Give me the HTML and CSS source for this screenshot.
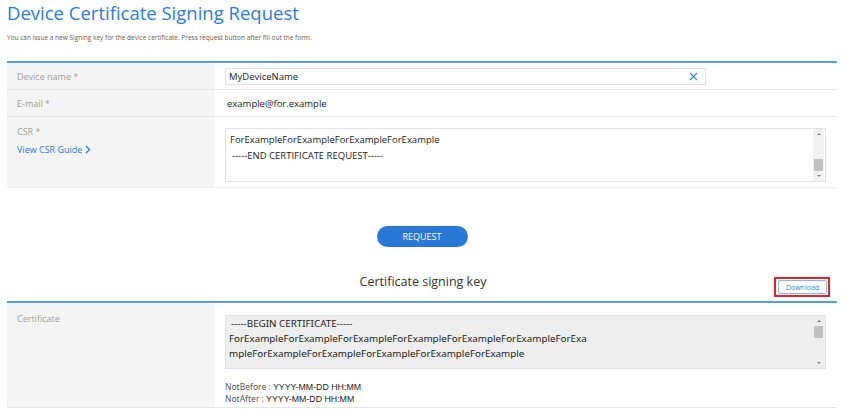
FILE: index.html
```html
<!DOCTYPE html>
<html>
<head>
<meta charset="utf-8">
<link rel="stylesheet" href="styles.css">
</head>
<body>
<div class="page">
  <h1 class="title">Device Certificate Signing Request</h1>
  <p class="intro">You can issue a new Signing key for the device certificate. Press request button after fill out the form.</p>

  <div class="table form-table">
    <div class="row row-short">
      <div class="label">Device name *</div>
      <div class="value">
        <div class="input">
          <span class="input-text">MyDeviceName</span>
          <svg class="clear" width="9" height="9" viewBox="0 0 9 9"><path d="M1 1 L8 8 M8 1 L1 8" stroke="#3b86dc" stroke-width="1.2" fill="none"/></svg>
        </div>
      </div>
    </div>
    <div class="row row-short">
      <div class="label">E-mail *</div>
      <div class="value"><span class="plain">example@for.example</span></div>
    </div>
    <div class="row row-tall">
      <div class="label label-top">
        <span>CSR *</span>
        <a class="guide">View CSR Guide <svg width="6" height="9" viewBox="0 0 6 9"><path d="M1 1 L4.5 4.5 L1 8" stroke="#2a78d6" stroke-width="1.2" fill="none"/></svg></a>
      </div>
      <div class="value value-top">
        <div class="textbox">
          <div class="textbox-content">
            <div class="csr-line">ForExampleForExampleForExampleForExample</div>
            <div class="csr-line indent">-----END CERTIFICATE REQUEST-----</div>
          </div>
          <div class="scrollbar">
            <span class="arrow up"></span>
            <span class="track"><span class="thumb thumb-bottom"></span></span>
            <span class="arrow down"></span>
          </div>
        </div>
      </div>
    </div>
  </div>

  <div class="actions">
    <button class="request">REQUEST</button>
  </div>

  <div class="section-head">
    <h2 class="section-title">Certificate signing key</h2>
    <div class="download-wrap"><button class="download">Download</button></div>
  </div>

  <div class="table cert-table">
    <div class="row row-cert">
      <div class="label label-top">Certificate</div>
      <div class="value value-top">
        <div class="textbox grey">
          <div class="textbox-content cert">
            <div class="cert-line indent">-----BEGIN CERTIFICATE-----</div>
            <div class="cert-line">ForExampleForExampleForExampleForExampleForExampleForExampleForExa</div>
            <div class="cert-line">mpleForExampleForExampleForExampleForExampleForExample</div>
          </div>
          <div class="scrollbar grey">
            <span class="arrow up"></span>
            <span class="track"><span class="thumb thumb-top"></span></span>
            <span class="arrow down"></span>
          </div>
        </div>
        <div class="dates">
          <div><span class="dl">NotBefore :</span> <span class="dv">YYYY-MM-DD HH:MM</span></div>
          <div><span class="dl">NotAfter :</span> <span class="dv">YYYY-MM-DD HH:MM</span></div>
        </div>
      </div>
    </div>
  </div>
</div>
</body>
</html>
```

FILE: styles.css
```css
* { box-sizing: border-box; }
html, body { margin: 0; padding: 0; background: #fff; }
body { font-family: "Open Sans", "Noto Sans", sans-serif; color: #333; }
.page { width: 830px; margin-left: 7px; }

.title {
  margin: 0;
  font-weight: 400;
  font-size: 18.5px;
  line-height: 24px;
  color: #2b7bd6;
  padding-top: 1px;
}
.intro {
  margin: 8px 0 0 0;
  font-size: 6.5px;
  line-height: 9px;
  color: #6a5a4c;
}

.table { border-top: 2px solid #5b9be0; }
.form-table { margin-top: 19px; }
.row { display: flex; border-bottom: 1px solid #e6e6e6; }
.row-short { height: 27px; }
.row-tall { height: 71px; border-bottom-color: #f0f0f0; }
.label {
  width: 207px;
  flex: none;
  background: #f4f4f4;
  padding-left: 10px;
  display: flex;
  align-items: center;
  font-size: 9px;
  color: #a0a0a0;
}
.label-top { flex-direction: column; align-items: flex-start; justify-content: flex-start; padding-top: 8px; }
.value { flex: 1; display: flex; align-items: center; padding-left: 11px; }
.value-top { flex-direction: column; align-items: flex-start; justify-content: flex-start; }

.input {
  width: 481px;
  height: 17px;
  border: 1px solid #e2e2e2;
  display: flex;
  align-items: center;
  justify-content: space-between;
  padding: 0 7px 0 3px;
}
.input-text { font-size: 9.5px; color: #222; }
.plain { font-size: 9.5px; color: #222; padding-left: 2px; }

.guide {
  margin-top: 5px;
  font-size: 9px;
  color: #2a78d6;
  display: flex;
  align-items: center;
  gap: 3px;
}

.row-tall .value-top { padding-top: 11px; }
.textbox {
  width: 601px;
  height: 54px;
  border: 1px solid #e2e2e2;
  display: flex;
  background: #fff;
}
.textbox.grey { background: #eeeeee; border-color: #e0e0e0; }
.textbox-content { flex: 1; padding: 3px 0 0 4px; overflow: hidden; }
.csr-line { font-size: 9.5px; line-height: 16px; color: #222; white-space: nowrap; }
.indent { padding-left: 2px; }

.scrollbar {
  width: 11px;
  flex: none;
  background: #f1f1f1;
  display: flex;
  flex-direction: column;
  align-items: center;
  margin-right: 1px;
}
.scrollbar.grey { background: #eeeeee; }
.arrow { width: 0; height: 0; border-left: 2px solid transparent; border-right: 2px solid transparent; margin: 4px 0; }
.arrow.up { border-bottom: 2px solid #777; }
.arrow.down { border-top: 2px solid #888; }
.track { flex: 1; width: 9px; display: flex; flex-direction: column; }
.thumb { width: 9px; height: 12px; background: #c1c1c1; }
.thumb-bottom { margin-top: auto; }
.thumb-top { margin-top: 0; }

.actions { display: flex; justify-content: center; padding-top: 38px; }
.request {
  width: 91px;
  height: 21px;
  border: none;
  border-radius: 11px;
  background: #2a78d6;
  color: #fff;
  font-family: "Open Sans", "Noto Sans", sans-serif;
  font-size: 9px;
  padding: 0;
}

.section-head {
  position: relative;
  display: flex;
  justify-content: center;
  margin-top: 24px;
  height: 30px;
  padding-left: 2px;
}
.section-title {
  margin: 0;
  font-weight: 400;
  font-size: 12.5px;
  line-height: 20px;
  color: #333;
  padding-top: 1px;
}
.download-wrap {
  position: absolute;
  right: 7px;
  top: 6px;
  border: 2px solid #e0232c;
  padding: 1px 1px 1px 2px;
}
.download {
  display: block;
  width: 49px;
  height: 14px;
  border: 1px solid #8ab5ea;
  border-radius: 2px;
  background: #fff;
  color: #3b7fd4;
  font-family: "Open Sans", "Noto Sans", sans-serif;
  font-size: 7px;
  padding: 0;
}

.row-cert { height: 105px; border-bottom-color: #e6e6e6; }
.row-cert .value-top { padding-top: 12px; }
.row-cert .label-top { padding-top: 9px; }
.cert { padding: 0 0 0 3px; }
.cert-line { font-family: "Noto Sans", "Open Sans", sans-serif; font-size: 9.8px; line-height: 15px; color: #222; white-space: nowrap; }
.dates { margin-top: 12px; font-size: 8.5px; line-height: 11px; color: #444; }
.dl { font-family: "Noto Sans", sans-serif; color: #555; }
.dv { font-family: "Liberation Sans", Arial, sans-serif; color: #222; font-size: 8.8px; }
```
